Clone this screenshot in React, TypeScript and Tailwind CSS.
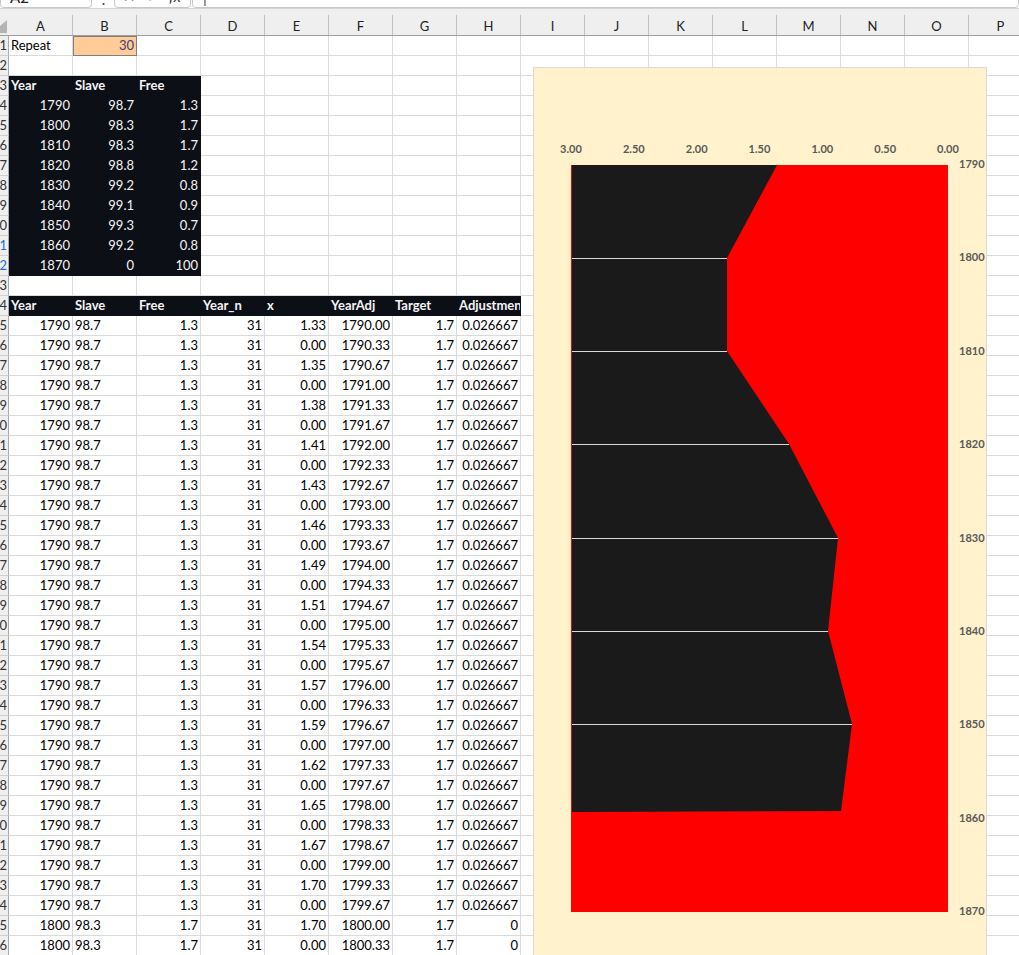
import React from 'react';

const COLS = 'ABCDEFGHIJKLMNOP'.split('');

type Cell = { v: string; right?: boolean; bold?: boolean; dark?: boolean; input?: boolean };

const SUMMARY = [
  ['1790', '98.7', '1.3'],
  ['1800', '98.3', '1.7'],
  ['1810', '98.3', '1.7'],
  ['1820', '98.8', '1.2'],
  ['1830', '99.2', '0.8'],
  ['1840', '99.1', '0.9'],
  ['1850', '99.3', '0.7'],
  ['1860', '99.2', '0.8'],
  ['1870', '0', '100'],
];

const HEADERS = ['Year', 'Slave', 'Free', 'Year_n', 'x', 'YearAdj', 'Target', 'Adjustment'];

function detailRow(k: number): string[] {
  if (k < 30) {
    const x = k % 2 === 0 ? (1.3 + ((k / 2 + 1) * 0.4) / 15).toFixed(2) : '0.00';
    return ['1790', '98.7', '1.3', '31', x, (1790 + k / 3).toFixed(2), '1.7', '0.026667'];
  }
  const j = k - 30;
  return ['1800', '98.3', '1.7', '31', j === 0 ? '1.70' : '0.00', (1800 + j / 3).toFixed(2), '1.7', '0'];
}

function rowCells(n: number): (Cell | null)[] {
  const cells: (Cell | null)[] = Array(16).fill(null);
  if (n === 1) {
    cells[0] = { v: 'Repeat' };
    cells[1] = { v: '30', right: true, input: true };
  }
  if (n === 3) ['Year', 'Slave', 'Free'].forEach((v, i) => (cells[i] = { v, bold: true, dark: true }));
  if (n >= 4 && n <= 12) SUMMARY[n - 4].forEach((v, i) => (cells[i] = { v, right: true, dark: true }));
  if (n === 14) HEADERS.forEach((v, i) => (cells[i] = { v, bold: true, dark: true }));
  if (n >= 15) detailRow(n - 15).forEach((v, i) => (cells[i] = { v, right: i !== 1 }));
  return cells;
}

function SheetCell({ cell }: { cell: Cell | null }) {
  if (!cell) return <div className="h-[20px] w-[64px] shrink-0 border-r border-b border-[#dadada]" />;
  let cls = 'flex h-[20px] w-[64px] shrink-0 items-center overflow-hidden whitespace-nowrap border-r border-b px-[2px] leading-[19px]';
  if (cell.dark) cls += ' border-[#0d0f17] bg-[#0d0f17] text-[#f4f4f4]';
  else if (cell.input) cls += ' border-[#7f7f7f] bg-[#ffcc99] text-[#3f3f76] shadow-[inset_1px_1px_0_#7f7f7f]';
  else cls += ' border-[#dadada] text-black';
  if (cell.right) cls += ' justify-end';
  if (cell.bold) cls += ' font-bold';
  return <div className={cls}>{cell.v}</div>;
}

function SheetRow({ n }: { n: number }) {
  const blue = n === 11 || n === 12;
  return (
    <div className="flex">
      <div className="flex h-[20px] w-[9px] shrink-0 items-center justify-end overflow-hidden border-r border-b border-r-[#ababab] border-b-[#d0d0d0] bg-[#efefef] leading-[19px]">
        <span className={blue ? 'mr-[1px] text-[#2b6cd4]' : 'mr-[1px] text-[#333]'}>{n}</span>
      </div>
      {rowCells(n).map((c, i) => (
        <SheetCell key={i} cell={c} />
      ))}
    </div>
  );
}

function FormulaStrip() {
  return (
    <div className="flex h-[8px] items-end overflow-hidden bg-white text-[15px]">
      <div className="h-[28px] w-[92px] shrink-0 rounded-b-[4px] border border-[#c6c6c6] pl-[9px] pt-[6px] leading-[20px] text-[#222]">
        A2
      </div>
      <div className="w-[22px] shrink-0 text-center leading-[12px] text-[#444]">⋮</div>
      <div className="flex h-[28px] w-[77px] shrink-0 items-start gap-[10px] rounded-b-[4px] border border-[#c6c6c6] pl-[8px] pt-[5px] leading-[20px]">
        <span className="text-[#d13438]">✕</span>
        <span className="text-[#3a9b3a]">✓</span>
        <span className="italic text-[#333]">fx</span>
      </div>
      <div className="ml-[1px] h-[28px] flex-1 rounded-b-[4px] border border-[#c6c6c6] pl-[10px] pt-[6px] leading-[20px] text-[#444]">
        |
      </div>
    </div>
  );
}

function ColumnHeader() {
  return (
    <div className="flex h-[28px] border-y border-t-[#d4d4d4] border-b-[#9f9f9f] bg-[#efefef]">
      <div className="w-[9px] shrink-0">
        <svg width="9" height="26" viewBox="0 0 9 26">
          <polygon points="0,17 7,11 7,24 0,24" fill="#b4b4b4" />
        </svg>
      </div>
      {COLS.map((c) => (
        <div key={c} className="flex w-[64px] shrink-0">
          <span className="flex-1 pt-[8px] text-center leading-[18px] text-[#222]">{c}</span>
          <div className="h-[20px] w-px self-end bg-[#c2c2c2]" />
        </div>
      ))}
    </div>
  );
}

const X_LABELS = ['3.00', '2.50', '2.00', '1.50', '1.00', '0.50', '0.00'];
const YEARS = ['1790', '1800', '1810', '1820', '1830', '1840', '1850', '1860', '1870'];
const BOUNDARY: [number, number][] = [
  [243, 97],
  [193, 190],
  [193, 283],
  [255, 376],
  [304, 470],
  [294, 563],
  [318, 656],
  [307, 743],
];
const GRID: [number, number][] = [
  [190.5, 193],
  [283.5, 193],
  [376.5, 255],
  [470.5, 304],
  [563.5, 294],
  [656.5, 318],
];

function Chart() {
  const black = [[38, 97], ...BOUNDARY, [38, 744]].map((p) => p.join(',')).join(' ');
  return (
    <div className="absolute top-[67px] left-[533px] h-[900px] w-[454px] border border-[#d9d9d9] bg-[#fff2cc]">
      <svg width="452" height="898" className="block">
        <rect x="37" y="97" width="377" height="747" fill="#ff0000" />
        <polygon points={black} fill="#1a1a1a" />
        {GRID.map(([y, x2]) => (
          <line key={y} x1="38" x2={x2} y1={y} y2={y} stroke="#d9d9d9" strokeWidth="1" />
        ))}
        <g fontFamily="Lato, 'Liberation Sans', sans-serif" fontSize="11" fontWeight="bold" fill="#595959">
          {X_LABELS.map((t, i) => (
            <text key={t} x={37 + i * 62.83} y="85" textAnchor="middle">
              {t}
            </text>
          ))}
          {YEARS.map((t, i) => (
            <text key={t} x="425" y={100 + i * 93.375}>
              {t}
            </text>
          ))}
        </g>
      </svg>
    </div>
  );
}

export default function App() {
  const rows = Array.from({ length: 46 }, (_, i) => i + 1);
  return (
    <div className="relative h-[955px] w-[1019px] overflow-hidden bg-white font-['Lato',sans-serif] text-[13px]">
      <FormulaStrip />
      <ColumnHeader />
      {rows.map((n) => (
        <SheetRow key={n} n={n} />
      ))}
      <Chart />
    </div>
  );
}
